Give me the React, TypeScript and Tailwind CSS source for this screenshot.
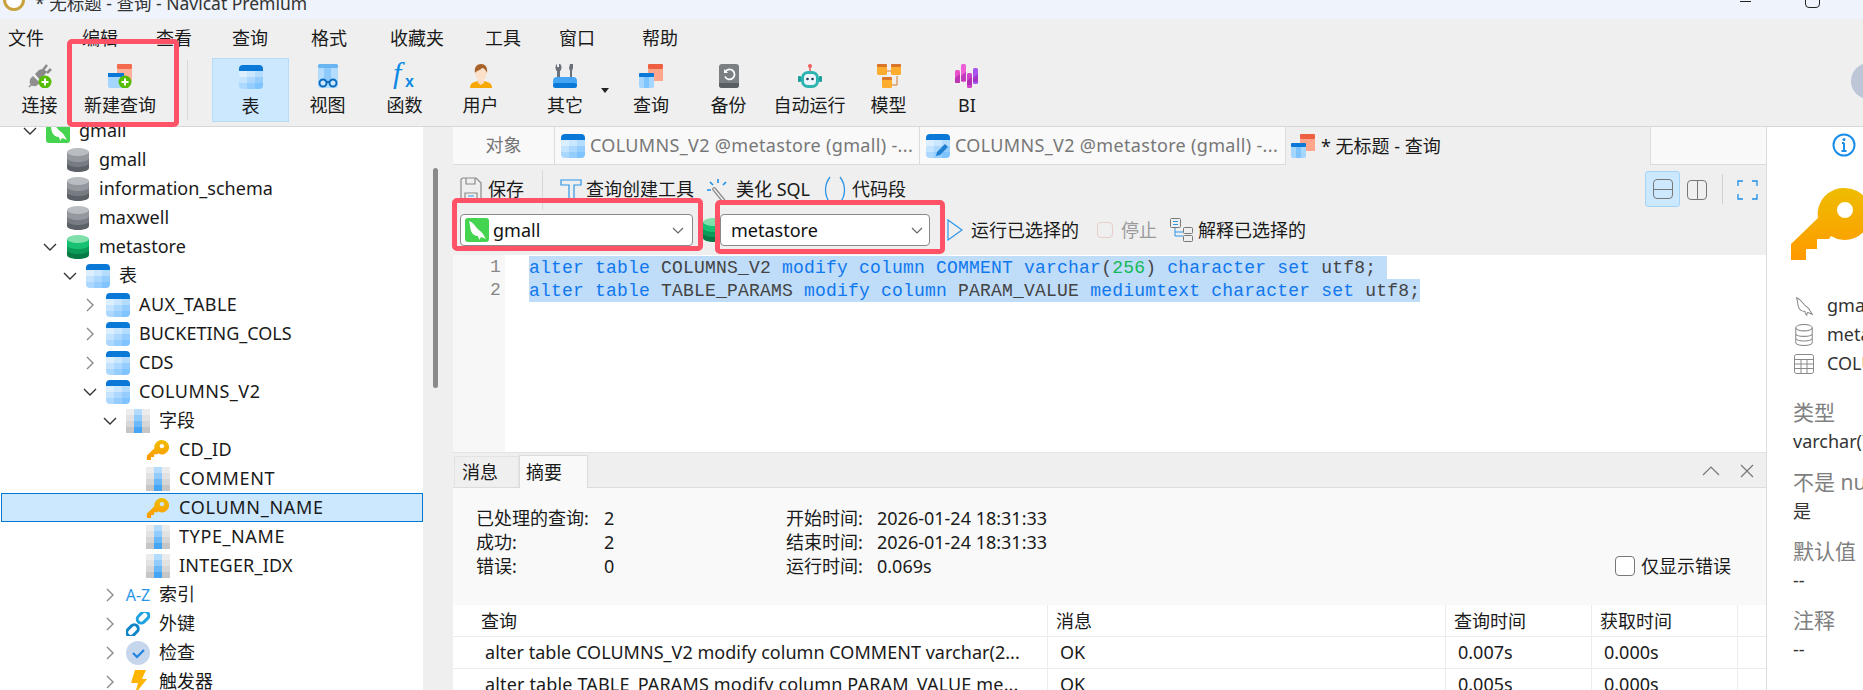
import React from 'react';

const TableIcon = ({ className = 'h-6 w-6', top = '#0a78d6', cells = ['#dcefff', '#cbe6ff', '#b3dcff', '#c4e3ff', '#acd8ff', '#95cdff', '#acd8ff', '#95cdff', '#7fc3ff'] }: { className?: string; top?: string; cells?: string[] }) => (
  <svg viewBox="0 0 24 24" className={className}>
    <defs>
      <clipPath id="tbl"><rect width="24" height="24" rx="4" /></clipPath>
    </defs>
    <g clipPath="url(#tbl)">
      {cells.map((c, i) => (
        <rect key={i} x={(i % 3) * 8} y={6 + Math.floor(i / 3) * 6} width="8" height="6" fill={c} />
      ))}
      <rect width="24" height="6" fill={top} />
    </g>
  </svg>
);

const ColumnIcon = () => (
  <svg viewBox="0 0 24 24" className="h-6 w-6">
    {[0, 1, 2, 3].map((r) => (
      <g key={r}>
        <rect x="0" y={r * 6} width="8" height="6" fill={['#ececec', '#e2e2e2', '#d6d6d6', '#c6c6c6'][r]} />
        <rect x="8" y={r * 6} width="8" height="6" fill={['#b4dcff', '#92ccff', '#6cb9fa', '#45a5f5'][r]} />
        <rect x="16" y={r * 6} width="8" height="6" fill={['#ececec', '#e2e2e2', '#d6d6d6', '#c6c6c6'][r]} />
      </g>
    ))}
  </svg>
);

const DbIcon = ({ colors, className = 'h-6 w-[22px]' }: { colors: string[]; className?: string }) => (
  <svg viewBox="0 0 22 24" className={className}>
    <path d="M0 4v16c0 2.4 5 4 11 4s11-1.600 11-4V4z" fill={colors[3]} />
    <path d="M0 4v11c0 2.400 5 4 11 4s11-1.600 11-4V4z" fill={colors[2]} />
    <path d="M0 4v6c0 2.400 5 4 11 4s11-1.600 11-4V4z" fill={colors[1]} />
    <ellipse cx="11" cy="4" rx="11" ry="4" fill={colors[0]} />
  </svg>
);
const GRAY_DB = ['#b9bdc2', '#94989e', '#777c82', '#5c6167'];
const GREEN_DB = ['#80e0ab', '#16c272', '#0c9a58', '#087a45'];

const DOLPHIN = 'M4 3c3 1 5 3 7 6 2 3 5 4 7 7 1 2 2 3 3 5-2-1-4-2-5-2-1 1-1 2-1 3-1-1-2-3-2-4-3 0-6-2-7-5-1-3-1-7-2-10z';

const MysqlIcon = ({ className = 'h-6 w-6' }: { className?: string }) => (
  <svg viewBox="0 0 24 24" className={className}>
    <rect width="24" height="24" rx="3" fill="#44d44f" />
    <path d={DOLPHIN} fill="#fff" />
  </svg>
);

const KeyIcon = ({ className = 'h-5 w-6' }: { className?: string }) => (
  <svg viewBox="0 0 80 72" className={className}>
    <defs>
      <linearGradient id="keyg" x1="0" y1="0" x2="0" y2="1">
        <stop offset="0" stopColor="#eebd00" />
        <stop offset="1" stopColor="#ff9900" />
      </linearGradient>
    </defs>
    <path
      fillRule="evenodd"
      d="M54 0a26 26 0 1 1 -14 48l-2 3h-12v10h-11v11h-15v-16l27-26a26 26 0 0 1 27-30zM54 14a8 8 0 1 0 0 16a8 8 0 0 0 0-16z"
      fill="url(#keyg)"
    />
  </svg>
);

const GreenPlus = ({ cx = 18, cy = 18 }: { cx?: number; cy?: number }) => (
  <g>
    <circle cx={cx} cy={cy} r="6.500" fill="#55bd00" />
    <path d={`M${cx - 3.5} ${cy}h7M${cx} ${cy - 3.5}v7`} stroke="#fff" strokeWidth="2" />
  </g>
);

const ConnectIcon = () => (
  <svg viewBox="0 0 24 24" className="h-6 w-6">
    <path d="M1 23l4-4M5 13l6 6-3 2c-2 1-4 0-5-1-1-2-1-3 0-5z" fill="#8f8f8f" stroke="#8f8f8f" strokeWidth="1.500" />
    <path d="M7 10l4-4c2-1 5-1 7 1l1 1-7 8z" fill="#8a8a8a" />
    <path d="M15 6l4-5M19 9l4-4" stroke="#8a8a8a" strokeWidth="2.500" />
    <GreenPlus cx={17} cy={18} />
  </svg>
);

const NewQueryIcon = () => (
  <svg viewBox="0 0 24 24" className="h-6 w-6">
    <rect x="9" y="0" width="15" height="5" rx="1" fill="#f26b4f" />
    <rect x="9" y="5" width="15" height="12" fill="#ffb09a" />
    <rect x="0" y="9" width="16" height="15" rx="2" fill="#a5d6ff" />
    <rect x="0" y="9" width="16" height="4" fill="#0a78d6" />
    <GreenPlus cx={17} cy={18} />
  </svg>
);

const QueryIcon = ({ className = 'h-6 w-6' }: { className?: string }) => (
  <svg viewBox="0 0 24 24" className={className}>
    <rect x="9" y="0" width="15" height="5" rx="1" fill="#ee5f42" />
    <rect x="9" y="5" width="15" height="12" fill="#ffa58c" />
    <rect x="0" y="9" width="15" height="15" rx="2" fill="#a5d6ff" />
    <rect x="5" y="13" width="5" height="11" fill="#7fc3ff" />
    <rect x="0" y="9" width="15" height="4" rx="1" fill="#0a78d6" />
  </svg>
);

const ViewIcon = () => (
  <svg viewBox="0 0 24 24" className="h-6 w-6">
    <rect x="2" y="0" width="20" height="24" rx="3" fill="#b3dcff" />
    <rect x="2" y="0" width="20" height="4" rx="1.500" fill="#69b5f2" />
    <rect x="8" y="4" width="7" height="14" fill="#8ec9fb" />
    <circle cx="7" cy="19" r="3.500" fill="#cfe8ff" stroke="#0a6cc0" strokeWidth="2" />
    <circle cx="17" cy="19" r="3.500" fill="#cfe8ff" stroke="#0a6cc0" strokeWidth="2" />
    <path d="M10 18h4" stroke="#0a6cc0" strokeWidth="2" />
  </svg>
);

const UserIcon = () => (
  <svg viewBox="0 0 24 24" className="h-6 w-6">
    <path d="M1 24c0-5 4-7 11-7s11 2 11 7z" fill="#f7a800" />
    <path d="M9 13h6v6l-3 2-3-2z" fill="#f9dcc4" />
    <ellipse cx="12" cy="8.500" rx="6" ry="8" fill="#fbe0ca" />
    <path d="M6 9C5 3 8 0 12 0s7 3 6 9c-1-3-3-5-5-5-1 2-5 2-7 5z" fill="#a8632a" />
  </svg>
);

const ToolsIcon = () => (
  <svg viewBox="0 0 24 24" className="h-6 w-6">
    <path d="M6 0v3h-2V0C2 1 2 6 4 7v8h3V7c2-1 2-6 0-7zM17 0h3v4l-1 3v8h-2V7l-1-3z" fill="#6b7178" />
    <rect x="0" y="13" width="24" height="11" rx="4" fill="#45a5f5" />
    <rect x="0" y="19" width="24" height="5" rx="2.500" fill="#0a78d6" />
  </svg>
);

const BackupIcon = () => (
  <svg viewBox="0 0 24 24" className="h-6 w-6">
    <rect x="2" y="0" width="20" height="24" rx="3" fill="#7a7f84" />
    <path d="M2 19h20v2a3 3 0 0 1-3 3H5a3 3 0 0 1-3-3z" fill="#5a5f64" />
    <path d="M8.500 7.500a5 5 0 1 1-.5 5" fill="none" stroke="#fff" strokeWidth="1.800" />
    <path d="M7 5v4h4z" fill="#fff" />
  </svg>
);

const RobotIcon = () => (
  <svg viewBox="0 0 24 24" className="h-6 w-6">
    <circle cx="12" cy="2" r="2" fill="#ee5f5f" />
    <path d="M12 3v4" stroke="#ee5f5f" strokeWidth="1.500" />
    <rect x="0" y="12" width="3" height="6" rx="1" fill="#1f9e9e" />
    <rect x="21" y="12" width="3" height="6" rx="1" fill="#1f9e9e" />
    <rect x="3" y="7" width="18" height="17" rx="7" fill="#2bb4b0" />
    <rect x="6" y="10" width="12" height="11" rx="4" fill="#eef6fb" />
    <circle cx="9.500" cy="15" r="1.300" fill="#1f3b57" />
    <circle cx="14.500" cy="15" r="1.300" fill="#1f3b57" />
  </svg>
);

const ModelBox = ({ x, y }: { x: number; y: number }) => (
  <g>
    <rect x={x} y={y} width="10" height="11" rx="1.500" fill="#ffad2e" />
    <rect x={x} y={y} width="10" height="3" rx="1" fill="#d9762a" />
  </g>
);
const ModelIcon = () => (
  <svg viewBox="0 0 24 24" className="h-6 w-6">
    <path d="M9 7h6M20 12v9h-9" fill="none" stroke="#d9762a" strokeWidth="1" />
    <ModelBox x={0} y={0} />
    <ModelBox x={14} y={0} />
    <ModelBox x={5} y={13} />
  </svg>
);

const BiIcon = () => (
  <svg viewBox="0 0 24 24" className="h-6 w-6">
    <rect x="0" y="6" width="5" height="13" rx="1.500" fill="#e84fc8" />
    <rect x="6" y="0" width="5" height="18" rx="1.500" fill="#ee5fd8" />
    <rect x="12" y="9" width="5" height="15" rx="1.500" fill="#d040c8" />
    <rect x="18" y="4" width="5" height="16" rx="1.500" fill="#a855f0" />
    <path d="M0 14l5-4v9H0zM6 12l5-4v9H6zM12 17l5-4v8h-5zM18 14l5-4v8h-5z" fill="#9a1fa0" opacity="0.55" />
  </svg>
);

const FxIcon = () => (
  <svg viewBox="0 0 24 24" className="h-6 w-6 overflow-visible">
    <text x="0" y="19" fontFamily="'Liberation Serif', serif" fontStyle="italic" fontSize="30" fill="#0a8ae6">f</text>
    <text x="12" y="23" fontFamily="'Liberation Sans', sans-serif" fontWeight="700" fontSize="16" fill="#0a8ae6">x</text>
  </svg>
);

const LinkIcon = () => (
  <svg viewBox="0 0 24 24" className="h-6 w-6" fill="none" stroke="#1fa3e0" strokeWidth="3">
    <rect x="11" y="1.500" width="13" height="8" rx="4" transform="rotate(-45 17 6)" />
    <rect x="0" y="14.500" width="13" height="8" rx="4" transform="rotate(-45 6.500 18.500)" stroke="#0f86c8" />
  </svg>
);

const CheckIcon = () => (
  <svg viewBox="0 0 24 24" className="h-6 w-6">
    <circle cx="12" cy="12" r="12" fill="#c6d6ec" />
    <path d="M7 12l4 4 7-7" fill="none" stroke="#1b82e0" strokeWidth="2" />
  </svg>
);

const BoltIcon = () => (
  <svg viewBox="0 0 24 24" className="h-6 w-6">
    <path d="M9 0h11l-4 9h5L9 24l3-11H5z" fill="#ffb400" />
  </svg>
);

const Chevron = ({ open }: { open: boolean }) =>
  open ? (
    <svg viewBox="0 0 14 8" className="h-2 w-3.5" fill="none" stroke="#333" strokeWidth="1.400">
      <path d="M1 1l6 6 6-6" />
    </svg>
  ) : (
    <svg viewBox="0 0 8 14" className="h-3.5 w-2" fill="none" stroke="#8a8a8a" strokeWidth="1.400">
      <path d="M1 1l6 6-6 6" />
    </svg>
  );

const MENU = [
  { label: '文件', className: 'ml-2' },
  { label: '编辑', className: 'ml-[38px]' },
  { label: '查看', className: 'ml-[38px]' },
  { label: '查询', className: 'ml-10' },
  { label: '格式', className: 'ml-[43px]' },
  { label: '收藏夹', className: 'ml-[43px]' },
  { label: '工具', className: 'ml-[41px]' },
  { label: '窗口', className: 'ml-[38px]' },
  { label: '帮助', className: 'ml-[47px]' },
];

function ToolItem({ label, icon, className, active }: { label: string; icon: React.ReactNode; className: string; active?: boolean }) {
  return (
    <div
      className={`relative mt-px flex h-[64px] flex-col items-center pt-[6px] ${className} ${
        active ? 'border border-[#b5dcfb] bg-[#cce8ff] pt-[5px]' : ''
      }`}
    >
      {icon}
      <span className="mt-[5px] leading-6">{label}</span>
    </div>
  );
}

type Row = { depth: number; open?: boolean; icon: React.ReactNode; label: string; selected?: boolean; track?: string };

const TABLE = <TableIcon />;
const ROWS: Row[] = [
  { depth: 0, open: true, icon: <MysqlIcon />, label: 'gmall' },
  { depth: 1, icon: <DbIcon colors={GRAY_DB} />, label: 'gmall' },
  { depth: 1, icon: <DbIcon colors={GRAY_DB} />, label: 'information_schema' },
  { depth: 1, icon: <DbIcon colors={GRAY_DB} />, label: 'maxwell' },
  { depth: 1, open: true, icon: <DbIcon colors={GREEN_DB} />, label: 'metastore' },
  { depth: 2, open: true, icon: TABLE, label: '表' },
  { depth: 3, open: false, icon: TABLE, label: 'AUX_TABLE', track: 'tracking-[0.4px]' },
  { depth: 3, open: false, icon: TABLE, label: 'BUCKETING_COLS' },
  { depth: 3, open: false, icon: TABLE, label: 'CDS' },
  { depth: 3, open: true, icon: TABLE, label: 'COLUMNS_V2', track: 'tracking-[0.5px]' },
  { depth: 4, open: true, icon: <ColumnIcon />, label: '字段' },
  { depth: 5, icon: <KeyIcon />, label: 'CD_ID', track: 'tracking-[0.2px]' },
  { depth: 5, icon: <ColumnIcon />, label: 'COMMENT', track: 'tracking-[0.7px]' },
  { depth: 5, icon: <KeyIcon />, label: 'COLUMN_NAME', selected: true, track: 'tracking-[0.7px]' },
  { depth: 5, icon: <ColumnIcon />, label: 'TYPE_NAME', track: 'tracking-[0.6px]' },
  { depth: 5, icon: <ColumnIcon />, label: 'INTEGER_IDX', track: 'tracking-[0.2px]' },
  { depth: 4, open: false, icon: <span className="text-[16px] leading-6 text-[#2b95e8]">A-Z</span>, label: '索引' },
  { depth: 4, open: false, icon: <LinkIcon />, label: '外键' },
  { depth: 4, open: false, icon: <CheckIcon />, label: '检查' },
  { depth: 4, open: false, icon: <BoltIcon />, label: '触发器' },
];

function TreeRow({ row }: { row: Row }) {
  return (
    <div
      className={`flex h-[29px] items-center whitespace-nowrap ${
        row.selected ? 'ml-px border border-[#0078d7] bg-[#cce8ff]' : ''
      }`}
      style={{ paddingLeft: 18 + row.depth * 20 - (row.selected ? 2 : 0) }}
    >
      <span className="mr-1 flex w-6 items-center justify-center">
        {row.open !== undefined && <Chevron open={row.open} />}
      </span>
      <span className="mr-[9px] flex h-6 w-6 items-center justify-center">{row.icon}</span>
      <span className={row.track}>{row.label}</span>
    </div>
  );
}

const kw = 'text-[#0f78ee]';
const Code1 = () => (
  <span className="inline-block h-[23px] bg-[#bfdcf9] leading-[25px] whitespace-pre text-[#444]">
    <span className={kw}>alter table</span> COLUMNS_V2 <span className={kw}>modify column COMMENT varchar</span>(<span className="text-[#14b85a]">256</span>) <span className={kw}>character set</span> utf8;{' '}
  </span>
);
const Code2 = () => (
  <span className="inline-block h-[23px] bg-[#bfdcf9] leading-[25px] whitespace-pre text-[#444]">
    <span className={kw}>alter table</span> TABLE_PARAMS <span className={kw}>modify column</span> PARAM_VALUE <span className={kw}>mediumtext character set</span> utf8;
  </span>
);

const SUMMARY = [
  ['已处理的查询:', '2', '开始时间:', '2026-01-24 18:31:33'],
  ['成功:', '2', '结束时间:', '2026-01-24 18:31:33'],
  ['错误:', '0', '运行时间:', '0.069s'],
];

const RESULT = [
  { sql: 'alter table COLUMNS_V2 modify column COMMENT varchar(2...', track: 'tracking-[0.03px]', msg: 'OK', query: '0.007s', fetch: '0.000s' },
  { sql: 'alter table TABLE_PARAMS modify column PARAM_VALUE me...', track: 'tracking-[0.15px]', msg: 'OK', query: '0.005s', fetch: '0.000s' },
];

const Callout = ({ className }: { className: string }) => (
  <div className={`pointer-events-none absolute rounded-[5px] border-[5px] border-[#ff5267] ${className}`} />
);

export default function App() {
  return (
    <div className="relative flex h-[690px] w-[1863px] flex-col overflow-hidden bg-[#efefef] font-['Noto_Sans','Noto_Sans_CJK_SC',sans-serif] text-[18px] text-[#1a1a1a]">
      {/* title bar, cut off by the screenshot */}
      <div className="flex h-[19px] items-start overflow-hidden bg-[#eff3fb]">
        <svg viewBox="0 0 24 24" className="mt-[-12px] ml-0.5 h-6 w-6 shrink-0">
          <circle cx="12" cy="12" r="9.500" fill="#fff" stroke="#c8a23c" strokeWidth="3" />
        </svg>
        <span className="mt-[-9px] ml-[9px] text-[17.5px] leading-6 whitespace-nowrap text-[#333]">* 无标题 - 查询 - Navicat Premium</span>
        <div className="ml-auto flex items-start gap-[54px] pr-[43px]">
          <div className="mt-px h-px w-[11px] bg-[#222]" />
          <div className="-mt-1 h-3 w-[15px] rounded-sm border border-[#222]" />
        </div>
      </div>

      <div className="flex h-[38px] items-center">
        {MENU.map((m) => (
          <span key={m.label} className={m.className}>{m.label}</span>
        ))}
      </div>

      <div className="relative flex h-[70px] border-b border-[#d8d8d8]">
        <ToolItem label="连接" icon={<ConnectIcon />} className="w-[79px]" />
        <ToolItem label="新建查询" icon={<NewQueryIcon />} className="ml-px w-20" />
        <div className="flex w-[52px] pt-[3px] pb-[6px] pl-[27px]">
          <div className="w-px bg-[#d8d8d8]" />
        </div>
        <ToolItem label="表" icon={<TableIcon />} className="w-[77px]" active />
        <ToolItem label="视图" icon={<ViewIcon />} className="w-[77px]" />
        <ToolItem label="函数" icon={<FxIcon />} className="w-[77px]" />
        <ToolItem label="用户" icon={<UserIcon />} className="w-[75px]" />
        <ToolItem label="其它" icon={<ToolsIcon />} className="w-[94px]" />
        <ToolItem label="查询" icon={<QueryIcon />} className="w-[78px]" />
        <ToolItem label="备份" icon={<BackupIcon />} className="w-[77px]" />
        <ToolItem label="自动运行" icon={<RobotIcon />} className="w-[85px]" />
        <ToolItem label="模型" icon={<ModelIcon />} className="w-[73px]" />
        <ToolItem label="BI" icon={<BiIcon />} className="w-[84px]" />
        <div className="absolute top-[31px] left-[601px] h-0 w-0 border-x-[4px] border-t-[5px] border-x-transparent border-t-[#222]" />
        <div className="absolute top-[6px] left-[1851px] h-[36px] w-[36px] rounded-full bg-[#bcc6d6]" />
      </div>

      <div className="flex min-h-0 flex-1">
        {/* connection tree */}
        <div className="relative flex w-[453px] shrink-0 overflow-hidden">
          <div className="w-[423px] shrink-0 bg-white">
            <div className="-mt-[11px]">
              {ROWS.map((row, i) => (
                <TreeRow key={i} row={row} />
              ))}
            </div>
          </div>
          <div className="flex-1 pt-[41px] pl-[10px]">
            <div className="h-[220px] w-[5px] rounded-full bg-[#8a8a8a]" />
          </div>
        </div>

        {/* query tab */}
        <div className="flex w-[1313px] shrink-0 flex-col">
          <div className="flex h-[38px] border-b border-[#dcdcdc] bg-[#f9f9f9]">
            <div className="flex w-[102px] items-center justify-center border-r border-[#dcdcdc] text-[#777]">对象</div>
            <div className="flex w-[365px] items-center gap-[5px] border-r border-[#dcdcdc] pl-[6px] whitespace-nowrap text-[#777]">
              <TableIcon className="h-6 w-6 shrink-0" />
              <span className="tracking-[0.33px]">COLUMNS_V2 @metastore (gmall) -...</span>
            </div>
            <div className="flex w-[366px] items-center gap-[5px] border-r border-[#dcdcdc] pl-[6px] whitespace-nowrap text-[#777]">
              <span className="relative h-6 w-6 shrink-0">
                <TableIcon className="h-6 w-6" />
                <svg viewBox="0 0 16 16" className="absolute right-0 bottom-0 h-4 w-4">
                  <path d="M2 14l1-4 8-8 3 3-8 8z" fill="#1f7fd0" />
                </svg>
              </span>
              <span className="tracking-[0.33px]">COLUMNS_V2 @metastore (gmall) -...</span>
            </div>
            <div className="-mb-px flex w-[365px] items-center gap-[6px] border-r border-[#dcdcdc] bg-[#efefef] pl-[5px] whitespace-nowrap">
              <QueryIcon className="h-6 w-6 shrink-0" />
              <span>* 无标题 - 查询</span>
            </div>
          </div>

          <div className="relative h-[90px] bg-[#efefef] pl-[7px]">
            <div className="flex h-[49px] items-center whitespace-nowrap">
              <svg viewBox="0 0 22 26" className="h-[26px] w-[22px]" fill="none" stroke="#8a8a8a" strokeWidth="1.200">
                <path d="M1 3a2 2 0 0 1 2-2h13l5 5v17a2 2 0 0 1-2 2H3a2 2 0 0 1-2-2z" />
                <path d="M6 1v6h9V1M5 25v-9h12v9" />
                <path d="M8 19h6M8 22h6" stroke="#2b95e8" />
              </svg>
              <span className="ml-[6px]">保存</span>
              <div className="ml-[18px] h-10 w-px bg-[#d8d8d8]" />
              <svg viewBox="0 0 22 24" className="ml-[17px] h-6 w-[22px]" fill="none" stroke="#2b95e8" strokeWidth="1.200">
                <path d="M1 2h20v5h-7v16H9V7H1z" />
              </svg>
              <span className="ml-1">查询创建工具</span>
              <svg viewBox="0 0 22 24" className="ml-[13px] h-6 w-[22px]" fill="none" strokeWidth="1.600">
                <path d="M11 1v4M3 4l3 3M19 4l-3 3M0 12h4" stroke="#1b8fe8" />
                <path d="M8 10l9 11c2 2-1 3-2 2L6 12c-1-2 1-3 2-2z" stroke="#8a8a8a" strokeWidth="1.200" />
              </svg>
              <span className="ml-[7px]">美化 SQL</span>
              <svg viewBox="0 0 22 28" className="ml-[14px] h-7 w-[22px]" fill="none" stroke="#2b95e8" strokeWidth="1.300">
                <path d="M6 1C0 9 0 19 6 27M16 1c6 8 6 18 0 26" />
              </svg>
              <span className="ml-[6px]">代码段</span>
            </div>
            <div className="flex h-8 items-center whitespace-nowrap">
              <div className="flex h-8 w-[233px] items-center rounded-sm border border-[#8a8a8a] bg-white pl-1 text-[#111]">
                <MysqlIcon className="h-6 w-6 shrink-0" />
                <span className="ml-1">gmall</span>
                <svg viewBox="0 0 12 7" className="ml-auto mr-2 h-[7px] w-3" fill="none" stroke="#666" strokeWidth="1.200">
                  <path d="M1 1l5 5 5-5" />
                </svg>
              </div>
              <DbIcon colors={GREEN_DB} className="ml-2.5 h-6 w-[22px] shrink-0" />
              <div className="relative -ml-[5px] flex h-8 w-[210px] items-center rounded-sm border border-[#8a8a8a] bg-white pl-[10px] text-[#111]">
                <span>metastore</span>
                <svg viewBox="0 0 12 7" className="ml-auto mr-[6px] h-[7px] w-3" fill="none" stroke="#666" strokeWidth="1.200">
                  <path d="M1 1l5 5 5-5" />
                </svg>
              </div>
              <svg viewBox="0 0 16 22" className="ml-[17px] h-[22px] w-4" fill="none" stroke="#2b95e8" strokeWidth="1.200">
                <path d="M1 1l14 10L1 21z" />
              </svg>
              <span className="ml-2">运行已选择的</span>
              <div className="ml-[18px] h-4 w-4 rounded-sm border border-[#e6cfc8]" />
              <span className="ml-2 text-[#9a9a9a]">停止</span>
              <svg viewBox="0 0 24 24" className="ml-[13px] h-6 w-6" fill="none" strokeWidth="1">
                <rect x="0.500" y="0.500" width="10" height="9" rx="1" stroke="#777" />
                <path d="M3 3.500h5M3 6.500h5M5 10v8h8M5 14h8" stroke="#2b95e8" />
                <rect x="13.500" y="9.500" width="9" height="6" rx="1" stroke="#777" />
                <rect x="13.500" y="17.500" width="9" height="6" rx="1" stroke="#777" />
              </svg>
              <span className="ml-1">解释已选择的</span>
            </div>
            <div className="absolute top-[6px] left-[1192px] flex h-[36px] w-[35px] items-center justify-center rounded-[3px] border border-[#a5d4f7] bg-[#cce8ff]">
              <div className="flex h-5 w-5 flex-col rounded-sm border border-[#777]">
                <div className="flex-1 border-b border-[#777]" />
                <div className="flex-1" />
              </div>
            </div>
            <div className="absolute top-[15px] left-[1234px] flex h-5 w-5 rounded-sm border border-[#777]">
              <div className="flex-1 border-r border-[#777]" />
              <div className="flex-1" />
            </div>
            <div className="absolute top-[9px] left-[1269px] h-[30px] w-px bg-[#d0d0d0]" />
            <svg viewBox="0 0 21 20" className="absolute top-[15px] left-[1284px] h-5 w-[21px]" fill="none" stroke="#1b8fe8" strokeWidth="1.300">
              <path d="M1 6V1h5M15 1h5v5M20 14v5h-5M6 19H1v-5" />
            </svg>
          </div>

          <div className="flex h-[197px] bg-white font-['Liberation_Mono',monospace] text-[18px] tracking-[0.2px]">
            <div className="w-[52px] shrink-0 bg-[#f7f7f7] pr-1 text-right leading-[25px] text-[#888]">
              <div className="h-[23px]">1</div>
              <div className="h-[23px]">2</div>
            </div>
            <div className="pl-6">
              <div className="h-[23px]"><Code1 /></div>
              <div className="h-[23px]"><Code2 /></div>
            </div>
          </div>

          <div className="flex min-h-0 flex-1 flex-col bg-white">
            <div className="flex h-[36px] shrink-0 items-end border-y border-[#e3e3e3] border-b-[#dcdcdc] bg-[#efefef] pl-px">
              <div className="flex h-[31px] w-[65px] items-center border-x border-t border-[#e3e3e3] pl-[7px]">消息</div>
              <div className="-mb-px flex h-[33px] w-[69px] items-center border-x border-t border-[#dcdcdc] bg-[#f9f9f9] pl-[6px]">摘要</div>
              <div className="ml-auto mr-[12px] mb-[9px] flex items-center gap-5">
                <svg viewBox="0 0 18 10" className="h-2.5 w-[18px]" fill="none" stroke="#777" strokeWidth="1.200">
                  <path d="M1 9l8-8 8 8" />
                </svg>
                <svg viewBox="0 0 14 14" className="h-3.5 w-3.5" fill="none" stroke="#777" strokeWidth="1.200">
                  <path d="M1 1l12 12M13 1L1 13" />
                </svg>
              </div>
            </div>
            <div className="flex h-[117px] shrink-0 items-start justify-between bg-[#f9f9f9] pt-[18px] pr-[35px] pl-[23px]">
              <div className="grid grid-cols-[128px_182px_91px_auto] leading-6">
                {SUMMARY.flat().map((cell, i) => (
                  <span key={i} className="whitespace-nowrap">{cell}</span>
                ))}
              </div>
              <div className="mt-12 flex h-6 items-center gap-[6px]">
                <div className="h-5 w-5 rounded-[4px] border border-[#777] bg-white" />
                <span>仅显示错误</span>
              </div>
            </div>
            <div className="whitespace-nowrap">
              <div className="grid h-[32px] grid-cols-[595px_398px_146px_146px] border-b border-[#ececec] leading-[33px]">
                <span className="border-r border-[#ececec] pl-7">查询</span>
                <span className="border-r border-[#ececec] pl-2">消息</span>
                <span className="border-r border-[#ececec] pl-2">查询时间</span>
                <span className="border-r border-[#ececec] pl-2">获取时间</span>
              </div>
              {RESULT.map((r) => (
                <div key={r.sql} className="grid h-[32px] grid-cols-[595px_398px_146px_146px] border-b border-[#ececec] leading-[31px]">
                  <span className={`overflow-hidden border-r border-[#ececec] pl-8 ${r.track}`}>{r.sql}</span>
                  <span className="border-r border-[#ececec] pl-3">{r.msg}</span>
                  <span className="border-r border-[#ececec] pl-3">{r.query}</span>
                  <span className="border-r border-[#ececec] pl-3">{r.fetch}</span>
                </div>
              ))}
            </div>
          </div>
        </div>

        {/* object info panel */}
        <div className="min-w-0 flex-1 overflow-hidden border-l border-[#dcdcdc] bg-white whitespace-nowrap">
          <svg viewBox="0 0 24 24" className="mt-[6px] ml-[65px] h-6 w-6" fill="none" stroke="#1b8fe8" strokeWidth="2">
            <circle cx="12" cy="12" r="10.500" />
            <path d="M12 10v8M9.500 18h5M10 10h2" />
            <circle cx="12" cy="6.500" r="1.500" fill="#1b8fe8" stroke="none" />
          </svg>
          <div className="mt-[31px] ml-6 w-20">
            <KeyIcon className="h-[72px] w-20" />
          </div>
          <div className="mt-[31px] pl-[26px] text-[#333]">
            <div className="flex h-[29px] items-center gap-3">
              <svg viewBox="0 0 24 24" className="h-[22px] w-[22px] shrink-0" fill="none" stroke="#8a8a8a" strokeWidth="1.100">
                <path d={DOLPHIN} />
              </svg>
              gmall
            </div>
            <div className="flex h-[29px] items-center gap-3">
              <svg viewBox="0 0 22 24" className="h-[22px] w-[22px] shrink-0" fill="none" stroke="#8a8a8a" strokeWidth="1.100">
                <ellipse cx="11" cy="4" rx="9" ry="3.500" />
                <path d="M2 4v16c0 2 4 3.500 9 3.500s9-1.500 9-3.500V4M2 10c0 2 4 3.500 9 3.500s9-1.500 9-3.500M2 15c0 2 4 3.500 9 3.500s9-1.500 9-3.500" />
              </svg>
              metastore
            </div>
            <div className="flex h-[29px] items-center gap-3">
              <svg viewBox="0 0 22 22" className="h-[22px] w-[22px] shrink-0" fill="none" stroke="#8a8a8a" strokeWidth="1">
                <rect x="1.500" y="1.500" width="19" height="19" rx="2" />
                <path d="M1.500 6.500h19M1.500 11h19M1.500 15.500h19M8 6.500v14M14 6.500v14" />
              </svg>
              COLUMN_NAME
            </div>
          </div>
          <div className="mt-[20px] pl-[26px] leading-[29px]">
            <div className="text-[21px] text-[#808080]">类型</div>
            <div className="text-[#333]">varchar(767)</div>
            <div className="mt-3 text-[21px] text-[#808080]">不是 null</div>
            <div className="text-[#333]">是</div>
            <div className="mt-[11px] text-[21px] text-[#808080]">默认值</div>
            <div className="text-[#333]">--</div>
            <div className="mt-[11px] text-[21px] text-[#808080]">注释</div>
            <div className="text-[#333]">--</div>
          </div>
        </div>
      </div>

      {/* hand-drawn annotations on top of the screenshot */}
      <Callout className="top-[39px] left-[67px] h-[88px] w-[112px]" />
      <Callout className="top-[198px] left-[452px] h-[53px] w-[251px]" />
      <Callout className="top-[200px] left-[715px] h-[54px] w-[230px]" />
    </div>
  );
}
